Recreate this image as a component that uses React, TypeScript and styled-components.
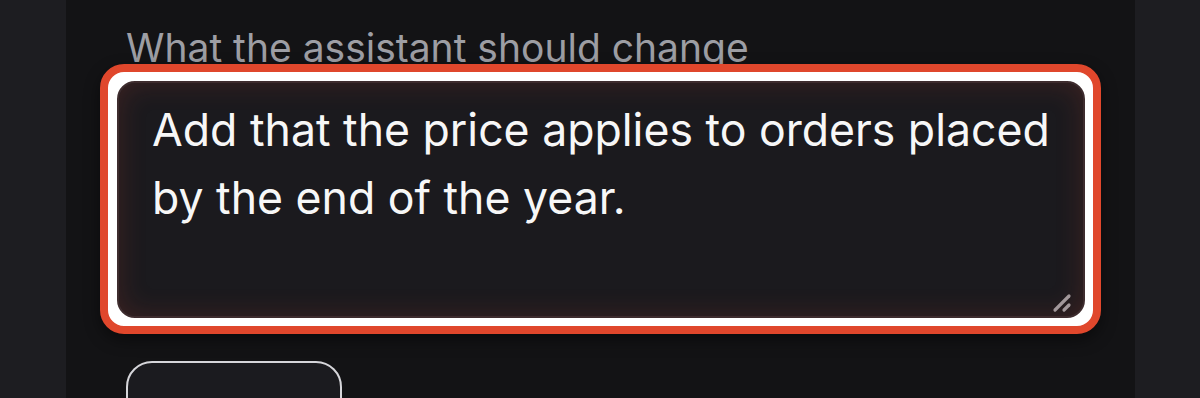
import React from 'react';
import styled, { createGlobalStyle } from 'styled-components';

const GlobalStyle = createGlobalStyle`
  html, body {
    margin: 0;
    padding: 0;
    background: #1d1d21;
    font-family: Inter, "Noto Sans", sans-serif;
    overflow: hidden;
  }
`;

const Page = styled.div`
  display: flex;
  box-sizing: border-box;
  height: 398px;
  width: 1135px;
  padding-left: 66px;
`;

const Panel = styled.section`
  flex: 1;
  display: flex;
  flex-direction: column;
  align-items: flex-start;
  background: #131315;
  padding: 24px 50px 0 51px;
`;

const Label = styled.label`
  margin-left: 9px;
  font-size: 39px;
  line-height: 48px;
  color: #9d9ea4;
  white-space: nowrap;
`;

const Field = styled.div`
  position: relative;
  z-index: 0;
  align-self: stretch;
  margin-top: 9px;

  &::before {
    content: '';
    position: absolute;
    inset: -17px -16px -16px -17px;
    z-index: -1;
    border: 8px solid #e0472c;
    border-radius: 24px;
    background: #ffffff;
    box-shadow: 0 6px 16px rgba(0, 0, 0, 0.45);
  }
`;

const TextArea = styled.textarea`
  display: block;
  box-sizing: border-box;
  width: 100%;
  height: 237px;
  margin: 0;
  padding: 13px 30px 13px 33px;
  border: 2px solid #3e2c2e;
  border-radius: 18px;
  background: #1b1a1e;
  box-shadow: inset 0 0 28px rgba(214, 74, 52, 0.18);
  color: #f7f7f7;
  font-family: Inter, "Noto Sans", sans-serif;
  font-size: 44.6px;
  line-height: 68px;
  resize: none;
  outline: none;
`;

const Grip = styled.svg`
  position: absolute;
  right: 12px;
  bottom: 5px;
  width: 21px;
  height: 21px;
  pointer-events: none;
`;

const Button = styled.button`
  margin-top: 43px;
  margin-left: 9px;
  width: 216px;
  height: 80px;
  flex-shrink: 0;
  box-sizing: border-box;
  border: 2px solid #d6d6da;
  border-radius: 26px;
  background: #1b1b1f;
`;

export default function App() {
  return (
    <>
      <GlobalStyle />
      <Page>
        <Panel>
          <Label htmlFor="change">What the assistant should change</Label>
          <Field>
            <TextArea
              id="change"
              readOnly
              value="Add that the price applies to orders placed by the end of the year."
            />
            <Grip viewBox="0 0 21 21">
              <path d="M3 18 L17 4" stroke="#a2989b" strokeWidth="3.2" strokeLinecap="round" />
              <path d="M12 18 L17 13" stroke="#a2989b" strokeWidth="3.2" strokeLinecap="round" />
            </Grip>
          </Field>
          <Button type="button" aria-label="Revise" />
        </Panel>
      </Page>
    </>
  );
}
